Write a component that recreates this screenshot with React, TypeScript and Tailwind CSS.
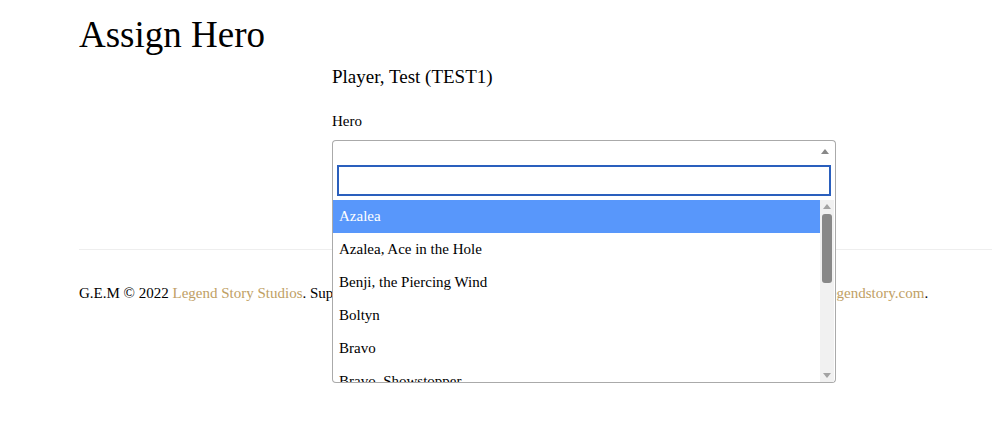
import { useState } from "react";

const heroes = [
  "Azalea",
  "Azalea, Ace in the Hole",
  "Benji, the Piercing Wind",
  "Boltyn",
  "Bravo",
  "Bravo, Showstopper",
];

function ArrowUp({ className = "" }: { className?: string }) {
  return (
    <svg width="8" height="5" viewBox="0 0 8 5" className={className}>
      <path d="M0 5 L4 0 L8 5 Z" fill="currentColor" />
    </svg>
  );
}

function HeroSelect() {
  const [active] = useState(0);
  return (
    <div className="relative w-[504px]">
      <div className="flex h-[23px] items-center justify-end rounded-t-[4px] border border-[#aaa] border-b-[#ccc] bg-white pr-[6px]">
        <ArrowUp className="text-[#888]" />
      </div>
      <div className="absolute left-0 top-[22px] z-10 w-[504px] rounded-b-[4px] border border-t-0 border-[#aaa] bg-white">
        <div className="px-[4px] pt-[3px] pb-[4px]">
          <div className="h-[31px] border-2 border-[#2a5fbd] bg-white" />
        </div>
        <div className="flex h-[182px]">
          <ul className="flex-1 overflow-hidden">
            {heroes.map((h, i) => (
              <li
                key={h}
                className={
                  "flex h-[33px] shrink-0 items-center px-[6px] text-[15px] " +
                  (i === active ? "bg-[#5897fb] text-white" : "text-black")
                }
              >
                {h}
              </li>
            ))}
          </ul>
          <div className="mr-[1px] flex w-[14px] flex-col items-center bg-[#f1f1f1]">
            <ArrowUp className="mt-[4px] text-[#a3a3a3]" />
            <div className="mt-[5px] h-[69px] w-[10px] rounded-[3px] bg-[#888]" />
            <div className="flex-1" />
            <ArrowUp className="mb-[4px] rotate-180 text-[#a3a3a3]" />
          </div>
        </div>
      </div>
    </div>
  );
}

export default function App() {
  return (
    <div
      className="min-h-[424px] overflow-hidden bg-white text-black"
      style={{ fontFamily: '"Liberation Serif", "Times New Roman", serif' }}
    >
      <div className="pl-[79px]">
        <h1 className="pt-[13px] text-[37px] leading-[44px]">Assign Hero</h1>
        <div className="ml-[253px]">
          <h2 className="mt-[8px] text-[19px] leading-[24px]">Player, Test (TEST1)</h2>
          <label className="mt-[23px] block text-[15px] leading-[19px]">Hero</label>
          <div className="mt-[9px]">
            <HeroSelect />
          </div>
        </div>
        <hr className="mt-[86px] border-t border-[#eee]" />
        <footer className="pt-[33px] text-[15px] leading-[20px]">
          G.E.M © 2022{" "}
          <a className="text-[#c0a064]">Legend Story Studios</a>. Support: for any questions or
          problems with your events, please get in touch at{" "}
          <a className="text-[#c0a064]">gem@legendstory.com</a>.
        </footer>
      </div>
    </div>
  );
}
